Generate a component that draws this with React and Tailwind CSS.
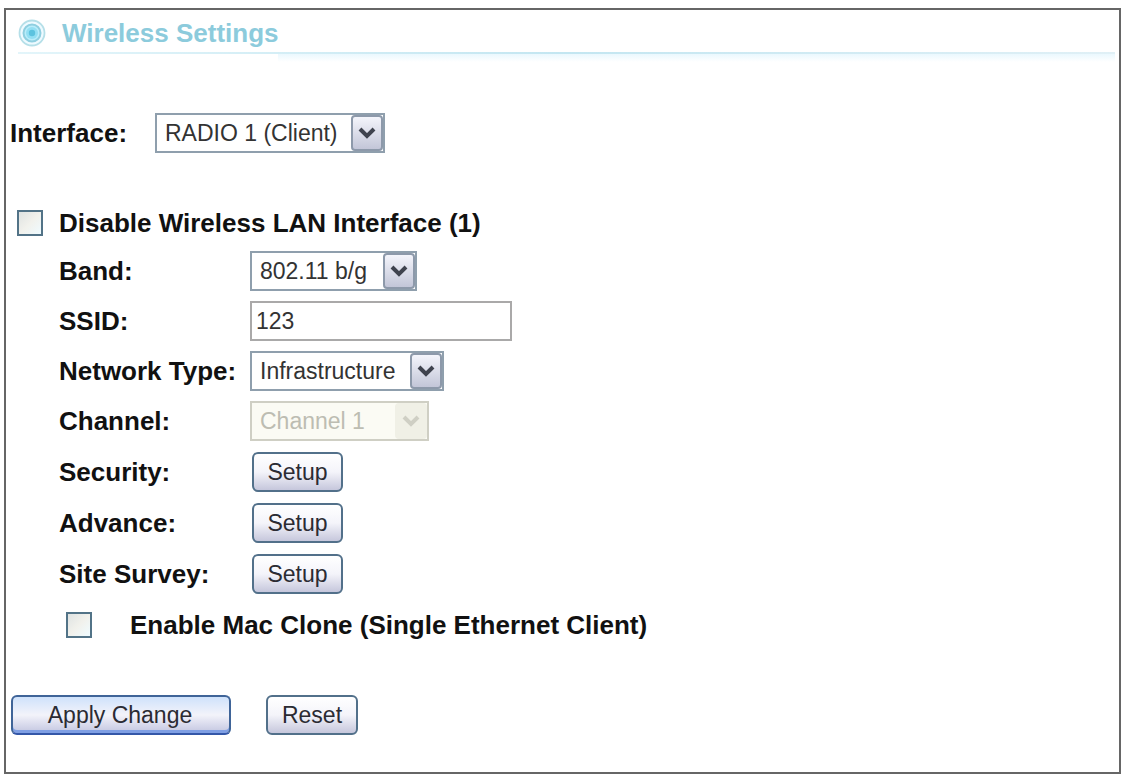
import React, { useState } from 'react';

const labelClass = 'text-[26px] leading-8 font-bold whitespace-nowrap';

const TargetIcon = () => (
  <svg viewBox="0 0 28 28" className="w-7 h-7 shrink-0" aria-hidden="true">
    <circle cx="14" cy="14" r="12.5" fill="#eefaff" stroke="#b5dfe8" strokeWidth="1.8" />
    <circle cx="14" cy="14" r="8.5" fill="#b9edfa" stroke="#8fcfe0" strokeWidth="2" />
    <circle cx="14" cy="14" r="6" fill="#93dff3" />
    <circle cx="14" cy="14" r="3.2" fill="#5cc3df" />
  </svg>
);

// Native select with its own arrow button drawn on top
const Select = ({ id, options, className, disabled = false }) => (
  <div className={`relative h-10 ${className}`}>
    <select
      id={id}
      disabled={disabled}
      className={`appearance-none w-full h-full border-2 pl-2 pr-9 text-[23px] leading-8 ${
        disabled ? 'border-[#cfcfc4] bg-[#fbfbf4] text-[#bdbdb2] opacity-100' : 'border-[#8f9fad] bg-white text-[#333]'
      }`}
    >
      {options.map((option) => (
        <option key={option}>{option}</option>
      ))}
    </select>
    <span
      className={`absolute right-0.5 top-0.5 bottom-0.5 w-8 flex items-center justify-center pointer-events-none rounded-sm border-2 ${
        disabled
          ? 'border-[#f0f0e6] bg-[#f0f0e6] text-[#cfcfc4]'
          : 'border-[#8d99aa] bg-linear-to-b from-[#f4f5fb] to-[#c3c6d8] text-[#3f434e]'
      }`}
    >
      <svg viewBox="0 0 18 12" className="w-[18px] h-3" fill="none" stroke="currentColor" strokeWidth="4" aria-hidden="true">
        <path d="M2 2l7 7 7-7" />
      </svg>
    </span>
  </div>
);

const Checkbox = ({ id, checked, onChange }) => (
  <input
    id={id}
    type="checkbox"
    checked={checked}
    onChange={(e) => onChange(e.target.checked)}
    className="appearance-none w-[26px] h-[26px] shrink-0 border-2 border-[#527387] bg-linear-to-br from-[#dfe3e2] via-[#f1f1ec] to-[#effbff] checked:bg-none checked:bg-[#527387]"
  />
);

const Button = ({ type = 'button', className = '', children, ...props }) => (
  <button
    type={type}
    className={`h-10 rounded-md border-2 text-[23px] leading-8 text-[#2b2b33] whitespace-nowrap ${className}`}
    {...props}
  >
    {children}
  </button>
);

const plainButton = 'border-[#52708a] bg-linear-to-b from-white via-[#f4f4fa] to-[#c6c7dc]';

const App = () => {
  const [disableLan, setDisableLan] = useState(false);
  const [macClone, setMacClone] = useState(false);
  const [ssid, setSsid] = useState('123');

  return (
    <div className="min-h-screen bg-white pt-2 pl-1 pr-0.5 pb-px font-['Liberation_Sans',Arial,sans-serif] text-[#111]">
      <form className="border-2 border-[#666] pb-[37px]" onSubmit={(e) => e.preventDefault()}>
        <header className="mx-1 pl-2">
          <div className="flex items-center gap-4 h-[42px] pt-2 pb-1">
            <TargetIcon />
            <h1 className="text-[26px] leading-8 font-bold text-[#8ccbdc]">Wireless Settings</h1>
          </div>
          <div className="h-0.5 bg-linear-to-r from-[#e3f5fa] via-[#c3e6f1] to-[#e0f0f6]" />
          <div className="h-2 ml-[260px] bg-linear-to-b from-[#eaf8fe] to-white" />
        </header>

        <div className="flex items-center mt-[51px] pl-1">
          <label htmlFor="interface" className={`w-[145px] ${labelClass}`}>Interface:</label>
          <Select id="interface" className="w-[230px]" options={['RADIO 1 (Client)', 'RADIO 2 (AP)']} />
        </div>

        <div className="flex items-center gap-4 mt-[54px] pl-[11px]">
          <Checkbox id="disable-lan" checked={disableLan} onChange={setDisableLan} />
          <label htmlFor="disable-lan" className={labelClass}>Disable Wireless LAN Interface (1)</label>
        </div>

        <div className="grid grid-cols-[191px_1fr] items-center gap-y-2.5 mt-3 pl-[53px]">
          <label htmlFor="band" className={labelClass}>Band:</label>
          <Select id="band" className="w-[167px]" options={['802.11 b/g', '802.11 b', '802.11 g']} />

          <label htmlFor="ssid" className={labelClass}>SSID:</label>
          <input
            id="ssid"
            type="text"
            value={ssid}
            onChange={(e) => setSsid(e.target.value)}
            className="w-[262px] h-10 border-2 border-[#aaa9a9] bg-white px-1 text-[23px] leading-8 text-[#333]"
          />

          <label htmlFor="network-type" className={labelClass}>Network Type:</label>
          <Select id="network-type" className="w-[194px]" options={['Infrastructure', 'Ad hoc']} />

          <label htmlFor="channel" className={labelClass}>Channel:</label>
          <Select id="channel" className="w-[179px]" options={['Channel 1']} disabled />

          {['Security', 'Advance', 'Site Survey'].map((name) => (
            <React.Fragment key={name}>
              <span className={labelClass}>{name}:</span>
              <div className="pt-px pl-0.5">
                <Button className={`block w-[91px] ${plainButton}`} aria-label={`Setup ${name}`}>Setup</Button>
              </div>
            </React.Fragment>
          ))}
        </div>

        <div className="flex items-center gap-[38px] mt-[15px] pl-[60px]">
          <Checkbox id="mac-clone" checked={macClone} onChange={setMacClone} />
          <label htmlFor="mac-clone" className={labelClass}>Enable Mac Clone (Single Ethernet Client)</label>
        </div>

        <div className="flex gap-[35px] mt-[54px] pl-[5px]">
          <Button
            type="submit"
            className="w-[220px] border-[#3f6498] border-b-[#3457a8] bg-linear-to-b from-[#cfe2fb] via-[#f3f3fa] to-[#c2c5e0] pr-0.5 shadow-[inset_0_-3px_0_#7f9fe4]"
          >
            Apply Change
          </Button>
          <Button type="reset" className={`w-[92px] ${plainButton}`} onClick={() => setSsid('123')}>Reset</Button>
        </div>
      </form>
    </div>
  );
};

export default App;
